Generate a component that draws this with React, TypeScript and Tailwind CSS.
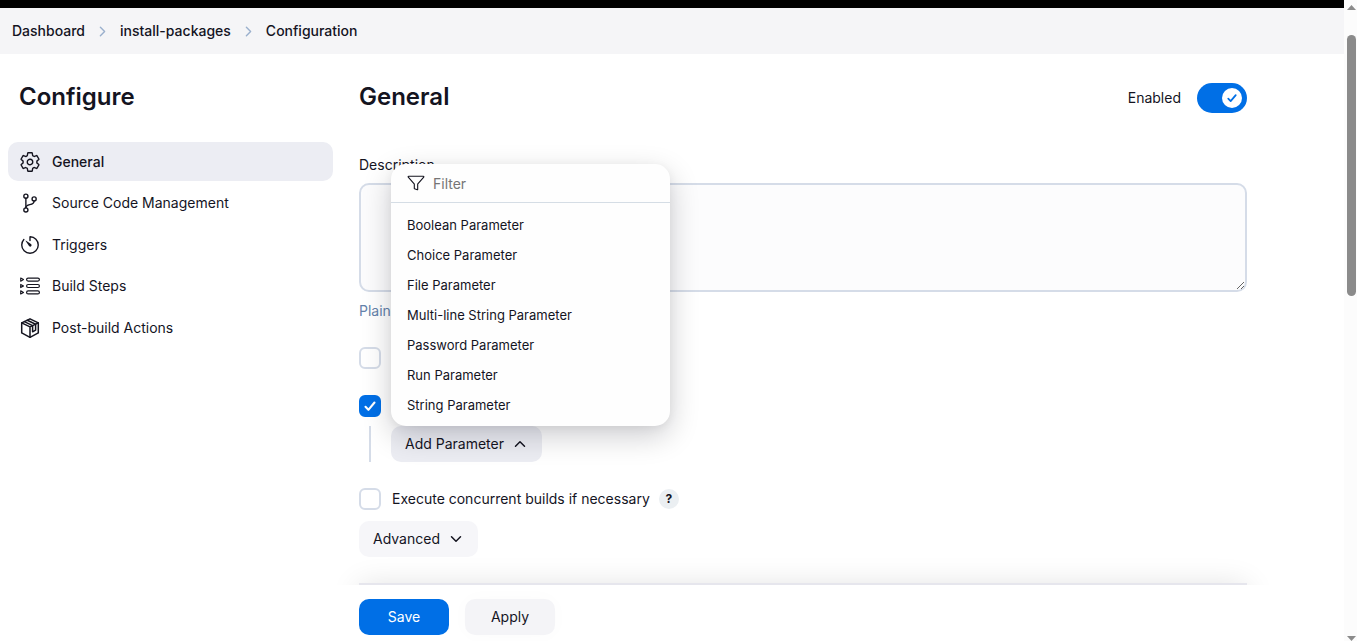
import { useState, type ReactNode } from "react";
import {
  IoSettingsOutline,
  IoGitBranchOutline,
  IoTimerOutline,
  IoFunnelOutline,
  IoChevronForward,
  IoChevronUp,
  IoChevronDown,
} from "react-icons/io5";

function StepsIcon() {
  return (
    <svg viewBox="0 0 22 22" className="size-[22px]" fill="none" stroke="currentColor" strokeWidth="1.2" strokeLinejoin="round" aria-hidden="true">
      <rect x="7.6" y="3.1" width="12.8" height="3" rx="1.5" />
      <rect x="7.6" y="9.5" width="12.8" height="3" rx="1.5" />
      <rect x="7.6" y="15.9" width="12.8" height="3" rx="1.5" />
      <path strokeWidth="1.1" d="M1.7 3v3.2l2.8-1.6zM1.7 9.4v3.2l2.8-1.6zM1.7 15.8v3.2l2.8-1.6z" />
    </svg>
  );
}

function PackageIcon() {
  return (
    <svg viewBox="0 0 22 22" className="size-[22px]" fill="none" stroke="currentColor" strokeWidth="1.5" strokeLinejoin="round" strokeLinecap="round" aria-hidden="true">
      <path d="M11 1.8 19.3 5.9v10L11 20.3l-8.3-4.4v-10z" />
      <path d="M2.7 5.9 11 9.9l8.3-4M11 9.9v10.4" />
      <path d="M5.4 4.6l8.2 4v6.2l3-1.7V7.2L8.3 3.2" />
    </svg>
  );
}

const navItems: { label: string; icon: ReactNode }[] = [
  { label: "General", icon: <IoSettingsOutline className="size-[22px]" /> },
  { label: "Source Code Management", icon: <IoGitBranchOutline className="size-[22px]" /> },
  { label: "Triggers", icon: <IoTimerOutline className="size-[22px]" /> },
  { label: "Build Steps", icon: <StepsIcon /> },
  { label: "Post-build Actions", icon: <PackageIcon /> },
];

const parameterTypes = [
  "Boolean Parameter",
  "Choice Parameter",
  "File Parameter",
  "Multi-line String Parameter",
  "Password Parameter",
  "Run Parameter",
  "String Parameter",
];

function Tick({ className }: { className: string }) {
  return (
    <svg viewBox="0 0 12 12" className={className} fill="none" stroke="currentColor" strokeWidth="2.1" strokeLinecap="round" strokeLinejoin="round" aria-hidden="true">
      <path d="M1.5 6.8 4.4 9.8 10.5 2.5" />
    </svg>
  );
}

function CheckBox({ id, label, defaultChecked }: { id: string; label?: string; defaultChecked?: boolean }) {
  return (
    <span className="relative flex size-[22px] shrink-0">
      <input
        id={id}
        type="checkbox"
        aria-label={label}
        defaultChecked={defaultChecked}
        className="peer size-[22px] appearance-none rounded-md border-2 border-[#d5dce8] bg-white checked:border-[#006fe6] checked:bg-[#006fe6]"
      />
      <Tick className="pointer-events-none absolute inset-0 m-auto hidden size-3 text-white peer-checked:block" />
    </span>
  );
}

function Scrollbar() {
  return (
    <div aria-hidden="true" className="flex w-[13px] shrink-0 flex-col items-center bg-[#fcfcfc] pt-[5px]">
      <svg viewBox="0 0 9 5" className="ml-0.5 h-[5px] w-[9px] fill-[#8b8b8b]"><path d="M4.5 0 9 5H0z" /></svg>
      <div className="mt-[25px] ml-0.5 h-[41%] w-[9px] rounded-full bg-[#8b8b8b]" />
      <svg viewBox="0 0 9 5" className="mt-auto ml-0.5 h-[5px] w-[9px] fill-[#8b8b8b]"><path d="M0 0h9L4.5 5z" /></svg>
    </div>
  );
}

export default function App() {
  const [filter, setFilter] = useState("");
  const shown = parameterTypes.filter((name) => name.toLowerCase().includes(filter.toLowerCase()));

  return (
    <div className="flex h-screen overflow-hidden bg-white font-['Inter',sans-serif] text-[14px] leading-5 text-[#14141f]">
      <div className="flex min-w-0 flex-1 flex-col">
        <div className="h-2 shrink-0 bg-black" />
        <nav aria-label="Breadcrumb" className="flex h-[46px] shrink-0 items-center bg-[#f5f5f7] px-3 font-medium">
          <a href="#dashboard">Dashboard</a>
          <IoChevronForward className="mx-2.5 size-[15px] text-[#9bb0cd]" />
          <a href="#install-packages">install-packages</a>
          <IoChevronForward className="mx-2.5 size-[15px] text-[#9bb0cd]" />
          <a href="#configuration">Configuration</a>
        </nav>

        <div className="flex min-h-0 flex-1 gap-[26px] pl-2">
          <aside className="w-[325px] shrink-0 pt-7">
            <h1 className="pl-[11px] text-[24px] leading-[30px] font-semibold">Configure</h1>
            <nav aria-label="Sections" className="mt-[30px] flex h-[205px] flex-col justify-between">
              {navItems.map((item, i) => (
                <a
                  key={item.label}
                  href={`#section-${i}`}
                  className={`flex h-[39px] items-center gap-[11px] rounded-[10px] px-[11px] ${i === 0 ? "bg-[#ecedf3] font-medium" : ""}`}
                >
                  {item.icon}
                  {item.label}
                </a>
              ))}
            </nav>
          </aside>

          <main className="flex max-w-[888px] min-w-0 flex-1 flex-col">
            <form className="flex flex-1 flex-col" onSubmit={(e) => e.preventDefault()}>
              <div className="flex items-start justify-between pt-7">
                <h2 className="text-[24px] leading-[30px] font-semibold">General</h2>
                <label className="relative mt-px flex items-center gap-4">
                  Enabled
                  <input type="checkbox" role="switch" defaultChecked className="h-[30px] w-[50px] appearance-none rounded-full bg-[#006fe6]" />
                  <span className="pointer-events-none absolute top-[5px] right-[5px] flex size-5 items-center justify-center rounded-full bg-white text-[#006fe6]">
                    <Tick className="size-[10px]" />
                  </span>
                </label>
              </div>

              <label htmlFor="description" className="mt-[42px] leading-5">Description</label>
              <textarea
                id="description"
                className="mt-2 block h-[109px] w-full shrink-0 resize-y rounded-[10px] border-2 border-[#d5dce8] bg-[#fcfcfd] p-2"
              />
              <p className="mt-[9px] text-[#6482aa]">Plain</p>

              <div className="mt-[26px] flex flex-col gap-[26px]">
                <CheckBox id="discard" label="Discard old builds" />
                <CheckBox id="parameterized" label="This project is parameterized" defaultChecked />
              </div>

              <div className="mt-[9px] ml-[10px] flex border-l-2 border-[#d5dce8] pl-5">
                <div className="relative">
                  <button type="button" aria-expanded="true" className="flex h-9 items-center gap-2 rounded-[10px] bg-[#ecedf3] px-3.5">
                    Add Parameter
                    <IoChevronUp className="size-4" />
                  </button>
                  <div className="absolute bottom-full left-0 z-10 w-[279px] rounded-[15px] bg-[#fefefe] shadow-[0_10px_30px_rgba(0,0,20,0.2),0_2px_10px_rgba(0,0,20,0.05)]">
                    <label className="flex h-[39px] items-center gap-2 border-b border-[#d5dde5] px-4">
                      <IoFunnelOutline className="size-[18px] shrink-0" />
                      <input
                        type="text"
                        aria-label="Filter"
                        placeholder="Filter"
                        value={filter}
                        onChange={(e) => setFilter(e.target.value)}
                        className="h-full min-w-0 flex-1 bg-transparent outline-none placeholder:text-[#757575]"
                      />
                    </label>
                    <div className="flex flex-col pt-[7px] pb-1.5">
                      {shown.map((name) => (
                        <button key={name} type="button" className="h-[30px] px-4 text-left text-[13px]">
                          {name}
                        </button>
                      ))}
                    </div>
                  </div>
                </div>
              </div>

              <div className="mt-[26px] flex h-[22px] items-center">
                <CheckBox id="concurrent" />
                <label htmlFor="concurrent" className="pl-[11px]">Execute concurrent builds if necessary</label>
                <button type="button" aria-label="Help for concurrent builds" className="ml-[9px] flex size-5 items-center justify-center rounded-full bg-[#ebeff2] text-xs font-bold">
                  ?
                </button>
              </div>
              <button type="button" className="mt-[11px] flex h-9 items-center gap-2 self-start rounded-[10px] bg-[#f6f6f9] px-3.5">
                Advanced
                <IoChevronDown className="size-4" />
              </button>

              <div className="relative mt-auto flex h-14 shrink-0 gap-4 bg-white pt-3.5">
                <div aria-hidden="true" className="pointer-events-none absolute -inset-x-8 bottom-full h-12 overflow-hidden px-8 pt-12">
                  <div className="h-14 shadow-[0_0_30px_rgba(0,0,0,0.12)]" />
                </div>
                <div aria-hidden="true" className="absolute inset-x-0 bottom-full h-0.5 bg-[#e6e6ed]" />
                <button type="submit" className="h-9 w-[90px] rounded-[10px] bg-[#006fe6] text-white">Save</button>
                <button type="button" className="h-9 w-[90px] rounded-[10px] bg-[#f4f4f7] shadow-[0_0_20px_rgba(0,0,0,0.02)]">Apply</button>
              </div>
            </form>
          </main>
        </div>
      </div>
      <Scrollbar />
    </div>
  );
}
